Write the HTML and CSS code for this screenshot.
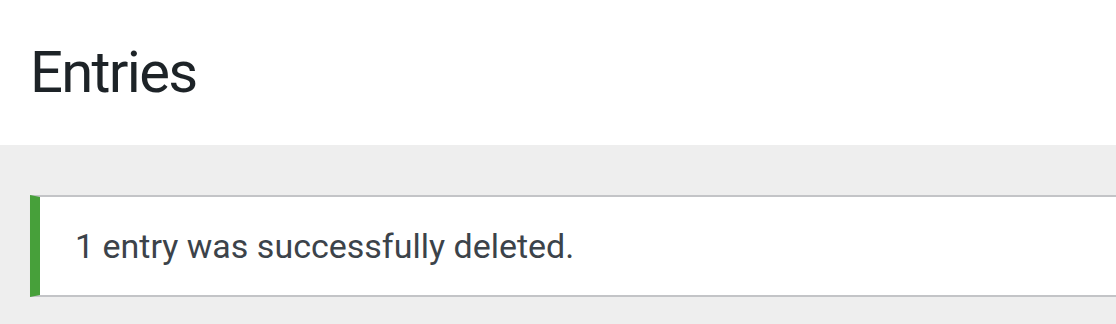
FILE: index.html
```html
<!DOCTYPE html>
<html lang="en">
<head>
<meta charset="utf-8">
<title>Entries</title>
<link rel="stylesheet" href="styles.css">
</head>
<body>
  <header class="page-header">
    <h1 class="page-title">Entries</h1>
  </header>
  <main class="content">
    <div class="notice notice-success">
      <p class="notice-text">1 entry was successfully deleted.</p>
    </div>
  </main>
</body>
</html>
```

FILE: styles.css
```css
html, body {
  margin: 0;
  padding: 0;
}
body {
  background: #eeeeee;
  font-family: Roboto, "Liberation Sans", Arial, sans-serif;
  overflow: hidden;
}
.page-header {
  background: #ffffff;
  height: 145px;
  padding: 0 0 0 30px;
  box-sizing: border-box;
}
.page-title {
  margin: 0;
  padding-top: 39px;
  font-size: 58px;
  line-height: 66px;
  font-weight: 400;
  letter-spacing: -1.7px;
  color: #1d2327;
}
.content {
  padding: 50px 0 0 30px;
}
.notice {
  background: #ffffff;
  border-top: 2px solid #c3c4c7;
  border-bottom: 2px solid #c3c4c7;
  border-left: 10px solid #47a03a;
  box-shadow: 0 1px 1px rgba(0, 0, 0, 0.04);
  height: 98px;
  display: flex;
  align-items: center;
  padding-left: 35px;
}
.notice-text {
  margin: 0;
  font-size: 34px;
  color: #3c434a;
}
```
